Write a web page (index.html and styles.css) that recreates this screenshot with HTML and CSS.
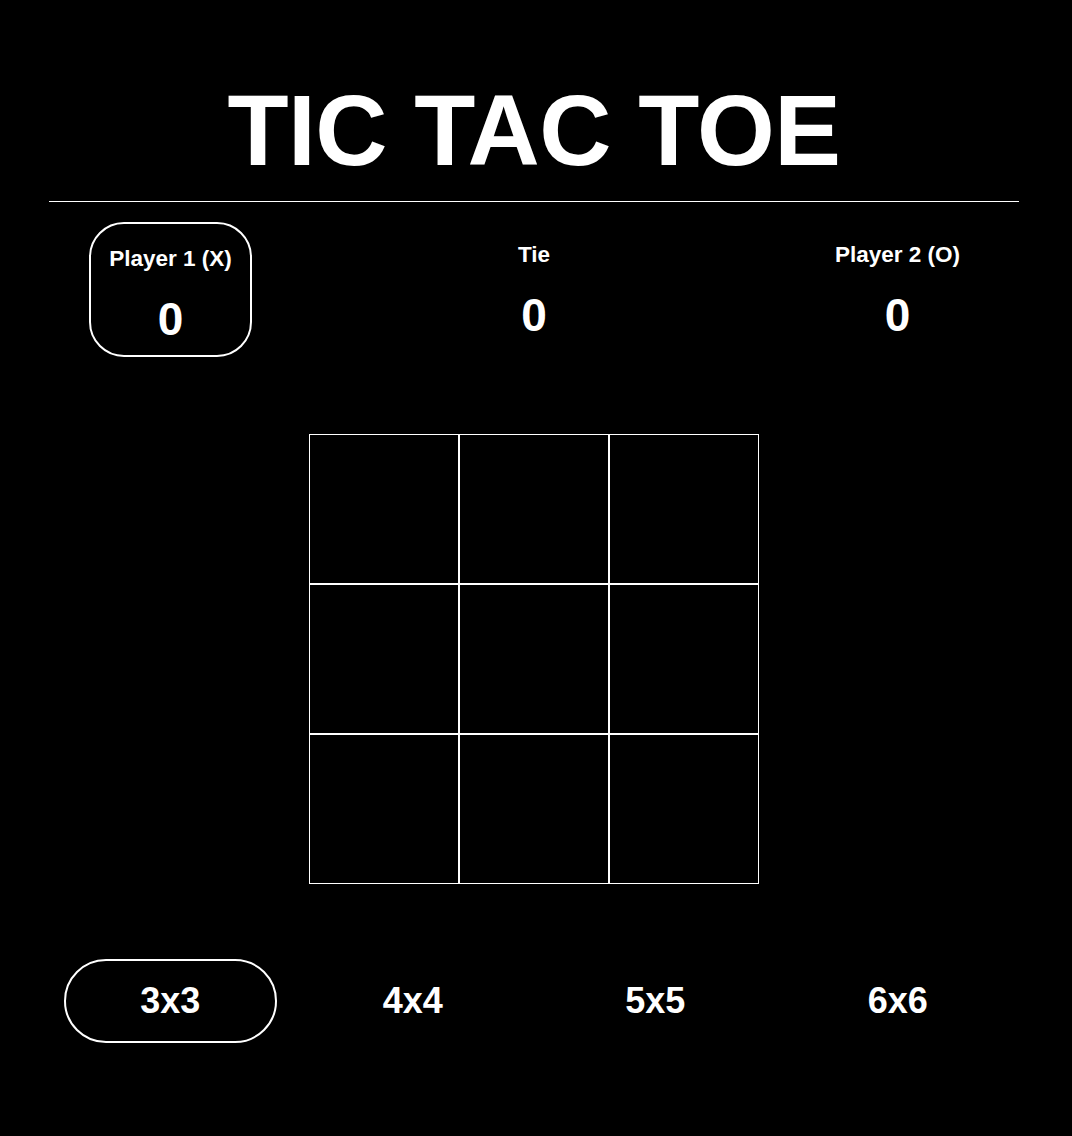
FILE: index.html
```html
<!DOCTYPE html>
<html lang="en">
<head>
<meta charset="utf-8">
<title>Tic Tac Toe</title>
<link rel="stylesheet" href="styles.css">
</head>
<body>
<main class="game">
  <header class="header">
    <h1 class="title">TIC TAC TOE</h1>
  </header>
  <section class="scores">
    <div class="score is-active">
      <div class="score-label">Player 1 (X)</div>
      <div class="score-value">0</div>
    </div>
    <div class="score">
      <div class="score-label">Tie</div>
      <div class="score-value">0</div>
    </div>
    <div class="score">
      <div class="score-label">Player 2 (O)</div>
      <div class="score-value">0</div>
    </div>
  </section>
  <section class="board">
    <div class="cell"></div><div class="cell"></div><div class="cell"></div>
    <div class="cell"></div><div class="cell"></div><div class="cell"></div>
    <div class="cell"></div><div class="cell"></div><div class="cell"></div>
  </section>
  <nav class="sizes">
    <div class="size-slot"><button class="size is-active">3x3</button></div>
    <div class="size-slot"><button class="size">4x4</button></div>
    <div class="size-slot"><button class="size">5x5</button></div>
    <div class="size-slot"><button class="size">6x6</button></div>
  </nav>
</main>
</body>
</html>
```
FILE: styles.css
```css
html, body {
  margin: 0;
  padding: 0;
  background: #000;
  color: #fff;
  font-family: "Liberation Sans", Arial, sans-serif;
}

.game {
  width: 970px;
  margin-left: 49px;
}

.header {
  padding-top: 73px;
  padding-bottom: 14px;
  border-bottom: 1px solid #fff;
}

.title {
  margin: 0;
  font-size: 100px;
  line-height: 114px;
  font-weight: 700;
  letter-spacing: -0.5px;
  text-align: center;
}

.scores {
  display: grid;
  grid-template-columns: repeat(3, 163px);
  justify-content: space-between;
  align-items: start;
  padding: 0 40px 0 40px;
  margin-top: 20px;
}

.score {
  box-sizing: border-box;
  width: 163px;
  border: 2px solid transparent;
  border-radius: 35px;
  padding: 18px 0 10px;
  text-align: center;
  font-weight: 700;
}

.score.is-active {
  border-color: #fff;
  padding-top: 22px;
}

.score-label {
  font-size: 22.5px;
  line-height: 26px;
}

.score-value {
  margin-top: 21px;
  font-size: 46px;
  line-height: 52px;
}

.board {
  display: grid;
  grid-template-columns: repeat(3, 150px);
  grid-template-rows: repeat(3, 150px);
  width: max-content;
  margin: 77px 0 0 260px;
}

.cell {
  box-sizing: border-box;
  border: 1px solid #fff;
  background: #000;
}

.sizes {
  display: grid;
  grid-template-columns: repeat(4, 1fr);
  margin-top: 75px;
}

.size-slot {
  display: flex;
  justify-content: center;
}

.size {
  box-sizing: border-box;
  width: 213px;
  height: 84px;
  border: 2px solid transparent;
  border-radius: 42px;
  background: transparent;
  color: #fff;
  font-family: "Liberation Sans", Arial, sans-serif;
  font-size: 36px;
  font-weight: 700;
  line-height: 40px;
  padding: 0;
  cursor: pointer;
}

.size.is-active {
  border-color: #fff;
}
```
